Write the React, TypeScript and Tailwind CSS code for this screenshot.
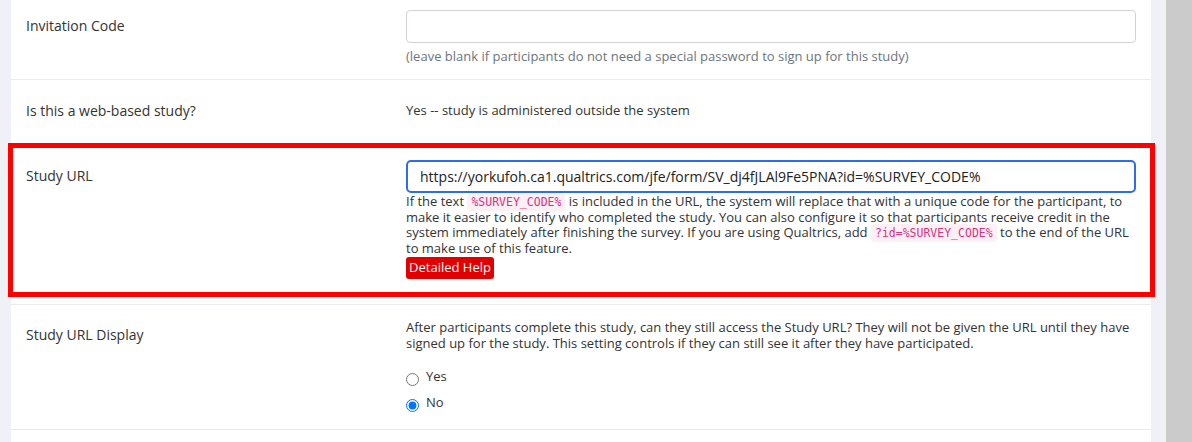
export default function App() {
  return (
    <div className="relative flex h-[442px] w-[1192px] overflow-hidden bg-[#f0f1f6] font-['Open_Sans','Noto_Sans',sans-serif] text-[#333333]">
      <div className="w-[11px] shrink-0" />

      <div className="w-[1140px] shrink-0 bg-white">
        {/* Invitation code */}
        <div className="grid grid-cols-[350px_730px] gap-x-[30px] border-b border-[#e9ecef] px-[15px] pt-[10px] pb-[13px]">
          <div className="pt-[5px] text-[14px] leading-[21px]">Invitation Code</div>
          <div>
            <div className="h-[33px] rounded-[4px] border border-[#cfd3d8] bg-white" />
            <p className="mt-[3px] text-[13px] leading-[20px] text-[#6c757d]">
              (leave blank if participants do not need a special password to sign up for this study)
            </p>
          </div>
        </div>

        {/* Web based */}
        <div className="grid grid-cols-[350px_730px] gap-x-[30px] border-b border-[#e9ecef] px-[15px] pt-[20px] pb-[24px]">
          <div className="text-[14px] leading-[21px]">Is this a web-based study?</div>
          <div className="text-[13px] leading-[21px]">Yes -- study is administered outside the system</div>
        </div>

        {/* Study URL */}
        <div className="grid grid-cols-[350px_730px] gap-x-[30px] border-b border-[#e9ecef] px-[15px] pt-[14px] pb-[25px]">
          <div className="pt-[5px] text-[14px] leading-[21px]">Study URL</div>
          <div>
            <div className="flex h-[33px] items-center rounded-[5px] border-2 border-[#2a6fe6] pl-[12px] text-[14px] text-[#222222]">
              https://yorkufoh.ca1.qualtrics.com/jfe/form/SV_dj4fJLAl9Fe5PNA?id=%SURVEY_CODE%
            </div>
            <p className="mt-[1px] text-[13px] leading-[15.5px]">
              If the text <Code>%SURVEY_CODE%</Code> is included in the URL, the system will replace that with a
              unique code for the participant, to make it easier to identify who completed the study. You can also
              configure it so that participants receive credit in the system immediately after finishing the survey.
              If you are using Qualtrics, add <Code>?id=%SURVEY_CODE%</Code> to the end of the URL to make use of
              this feature.
            </p>
            <button
              type="button"
              className="mt-[1px] flex h-[22px] w-[88px] items-center justify-center rounded-[3px] bg-[#e00000] text-[13px] text-white"
            >
              Detailed Help
            </button>
          </div>
        </div>

        {/* Study URL display */}
        <div className="grid grid-cols-[350px_730px] gap-x-[30px] border-b border-[#e9ecef] px-[15px] pt-[14px] pb-[16px]">
          <div className="pt-[5px] text-[14px] leading-[21px]">Study URL Display</div>
          <div className="text-[13px]">
            <p className="leading-[16px]">
              After participants complete this study, can they still access the Study URL? They will not be given
              the URL until they have signed up for the study. This setting controls if they can still see it after
              they have participated.
            </p>
            <label className="mt-[15px] flex items-start gap-[7px] leading-[21px]">
              <input type="radio" name="display" className="m-0 mt-[7px] h-[13px] w-[13px]" />
              Yes
            </label>
            <label className="mt-[5px] flex items-start gap-[7px] leading-[21px]">
              <input type="radio" name="display" defaultChecked className="m-0 mt-[7px] h-[13px] w-[13px]" />
              No
            </label>
          </div>
        </div>
      </div>

      <div className="w-[15px] shrink-0" />
      <div className="w-[26px] shrink-0 bg-[#cbcbcb]" />

      {/* highlight annotation */}
      <div className="pointer-events-none absolute left-[8px] top-[143px] h-[154px] w-[1147px] border-[5px] border-[#ff0000]" />
    </div>
  );
}

function Code({ children }: { children: string }) {
  return (
    <code className="rounded-[4px] bg-[#fcf0f5] px-[4px] py-[2px] font-['DejaVu_Sans_Mono',monospace] text-[11.5px] leading-[10px] text-[#d63384]">
      {children}
    </code>
  );
}
